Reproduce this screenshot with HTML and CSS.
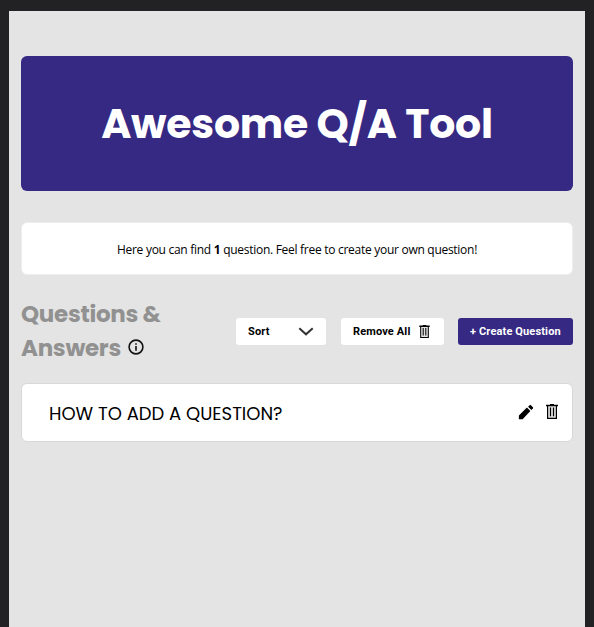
FILE: index.html
```html
<!DOCTYPE html>
<html lang="en">
<head>
<meta charset="utf-8">
<title>Awesome Q/A Tool</title>
<link rel="stylesheet" href="styles.css">
</head>
<body>
<svg class="sprite" aria-hidden="true">
  <symbol id="trash" viewBox="0 0 12 15">
    <path d="M1.500 2h9v12h-9z" fill="#e2e2e2"/>
    <path d="M4 0h4v.7h4v1.500h-1V15H1V2.200H0V.7h4zM2.200 2.200v11.600h7.600V2.200zM3.900 3.600h1.200v8.600H3.900zM6.900 3.600h1.200v8.600H6.900z" fill-rule="evenodd"/>
  </symbol>
</svg>
<main class="page">
  <header class="banner"><h1 class="title">Awesome Q/A Tool</h1></header>
  <p class="summary"><span>Here you can find <b>1</b> question. Feel free to create your own question!</span></p>
  <section class="toolbar">
    <h2 class="heading">Questions &amp;<br>Answers<svg class="info" viewBox="0 0 16 16"><circle cx="8" cy="8" r="6.9" fill="none" stroke="#111" stroke-width="1.6"/><path d="M7.2 4.2h1.6v1.5H7.2zM7.2 7h1.6v4.700H7.2z" fill="#111"/></svg></h2>
    <div class="actions">
      <button class="btn sort"><span>Sort</span><svg class="chevron" viewBox="0 0 16 9"><path d="M1.3 1.3 8 7.3l6.700-6" fill="none" stroke="#333" stroke-width="2"/></svg></button>
      <button class="btn remove"><span>Remove All</span><svg class="trash-small"><use href="#trash"/></svg></button>
      <button class="btn create"><span>+ Create Question</span></button>
    </div>
  </section>
  <article class="question">
    <span class="question-text">HOW TO ADD A QUESTION?</span>
    <svg class="pencil" viewBox="0 0 24 24"><path d="M2.500 16.500V21.500h5L17.810 10.700l-4.600-4.600zM21.200 7.300a1.200 1.200 0 0 0 0-1.700l-2.700-2.700a1.200 1.200 0 0 0-1.700 0l-2 2 4.400 4.400z"/></svg>
    <svg class="trash"><use href="#trash"/></svg>
  </article>
</main>
</body>
</html>
```
FILE: styles.css
```css
* { box-sizing: border-box; }
body {
  margin: 0;
  min-height: 627px;
  padding: 11px 9px 0;
  background: #222224;
  color: #000;
}
.sprite { display: none; }
.page {
  height: 616px;
  padding: 45px 12px 0;
  background: #e4e4e4;
}
.banner {
  height: 135px;
  display: flex;
  align-items: center;
  justify-content: center;
  border-radius: 6px;
  background: #362983;
}
.title {
  margin: 0;
  font: 700 41px/60px Poppins, Inter, sans-serif;
  letter-spacing: -0.25px;
  color: #fff;
  white-space: nowrap;
}
.summary {
  height: 53px;
  margin: 31px 0 0;
  padding-top: 2px;
  display: flex;
  align-items: center;
  justify-content: center;
  border: 1px solid #eee;
  border-radius: 6px;
  background: #fff;
  font: 12px/18px "Segoe UI", "Open Sans", sans-serif;
  letter-spacing: -0.28px;
  white-space: nowrap;
}
.toolbar {
  display: flex;
  justify-content: space-between;
  align-items: center;
  height: 68px;
  margin-top: 22px;
}
.heading {
  margin: 0;
  font: 700 23px/34px Poppins, Inter, sans-serif;
  letter-spacing: -0.3px;
  color: #919191;
  white-space: nowrap;
}
.info { width: 16px; height: 16px; margin-left: 7px; position: relative; top: -1px; }
.actions { display: flex; gap: 15px; }
.btn {
  height: 27px;
  margin: 0;
  padding: 1px 12px 0;
  display: flex;
  align-items: center;
  justify-content: space-between;
  border: 0;
  border-radius: 3px;
  background: #fff;
  color: #000;
  font: 700 11px/14px Roboto, sans-serif;
  letter-spacing: 0.14px;
  white-space: nowrap;
}
.sort { width: 90px; }
.remove { width: 103px; margin-right: -1px; padding-right: 14px; }
.create { width: 115px; background: #362983; color: #fff; }
.chevron { width: 16px; height: 9px; margin-bottom: 1px; }
.trash-small { width: 11px; height: 13px; margin-bottom: 1px; }
.question {
  height: 59px;
  margin-top: 18px;
  padding: 0 14px 0 27px;
  display: flex;
  align-items: center;
  border: 1px solid #d8d8d8;
  border-radius: 6px;
  background: #fff;
}
.question-text {
  flex: 1;
  padding-top: 1px;
  font: 400 18px/27px Poppins, Inter, sans-serif;
  white-space: nowrap;
}
.pencil { width: 18px; height: 18px; margin: 0 11px 2px 0; }
.trash { width: 12px; height: 15px; margin-bottom: 2px; }
```
